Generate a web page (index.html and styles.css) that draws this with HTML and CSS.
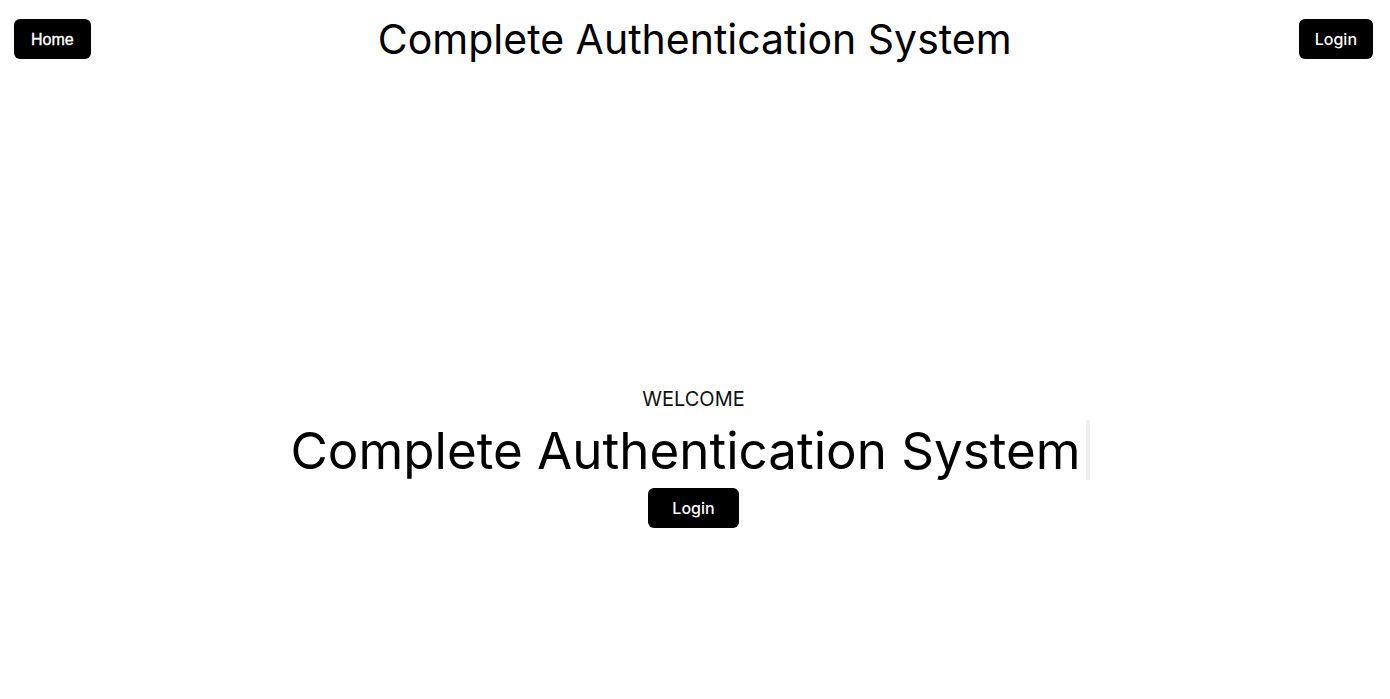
FILE: index.html
```html
<!DOCTYPE html>
<html lang="en">
<head>
<meta charset="utf-8">
<title>Complete Authentication System</title>
<link rel="stylesheet" href="styles.css">
</head>
<body>
<header class="topbar">
  <a class="btn btn-nav btn-home" href="#">Home</a>
  <h1 class="site-title">Complete Authentication System</h1>
  <a class="btn btn-nav" href="#">Login</a>
</header>
<main class="hero">
  <p class="welcome">WELCOME</p>
  <h2 class="hero-title"><span class="typed">Complete Authentication System</span><span class="cursor"></span></h2>
  <a class="btn btn-hero" href="#">Login</a>
</main>
</body>
</html>
```

FILE: styles.css
```css
* { box-sizing: border-box; }
html, body { margin: 0; padding: 0; }
body {
  font-family: Inter, "Noto Sans", sans-serif;
  color: #000;
  background: #fff;
  height: 699px;
  display: flex;
  flex-direction: column;
}
.topbar {
  display: flex;
  align-items: center;
  justify-content: space-between;
  padding: 19px 17px 0 14px;
}
.site-title {
  margin: 0;
  font-weight: 400;
  font-size: 41px;
  line-height: 40px;
}
.btn {
  display: inline-flex;
  align-items: center;
  justify-content: center;
  background: #000;
  color: #fff;
  text-decoration: none;
  border-radius: 6px;
  height: 40px;
  font-size: 16px;
  font-weight: 500;
}
.btn-nav { padding: 0 16px; }
.btn-home {
  font-family: "Liberation Sans", Arial, sans-serif;
  font-weight: 400;
  padding: 2px 17px 0;
  -webkit-text-stroke: 0.35px #fff;
}
.hero {
  flex: 1;
  display: flex;
  flex-direction: column;
  align-items: center;
  padding: 326px 3px 0 0;
}
.welcome {
  margin: 0;
  font-size: 20px;
  line-height: 28px;
  color: #111;
}
.hero-title {
  margin: 7px 6px 0 0;
  font-weight: 400;
  font-size: 51.1px;
  line-height: 60px;
  display: flex;
  align-items: stretch;
}
.cursor {
  width: 4px;
  margin-left: 6px;
  background: #eee;
}
.btn-hero { padding: 0 24px; margin-top: 8px; }
```
